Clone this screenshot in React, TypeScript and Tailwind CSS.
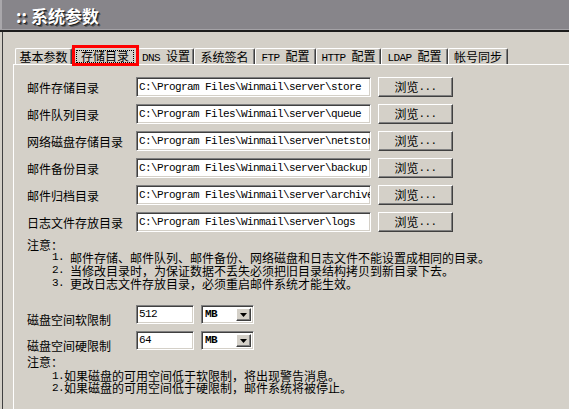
import type { ReactNode } from "react";
import clsx from "clsx";

const Mono = ({ children, className }: { children: ReactNode; className?: string }) => (
  <span className={clsx("font-['Liberation_Mono',monospace] text-[11px] tracking-[-0.6px]", className)}>
    {children}
  </span>
);

const tabs: { label: ReactNode; w: string; active?: boolean }[] = [
  { label: "基本参数", w: "w-[57px]" },
  { label: "存储目录", w: "w-[66px]", active: true },
  { label: <><Mono>DNS </Mono>设置</>, w: "w-[56px]" },
  { label: "系统签名", w: "w-[61px]" },
  { label: <><Mono>FTP </Mono>配置</>, w: "w-[61px]" },
  { label: <><Mono>HTTP </Mono>配置</>, w: "w-[65px]" },
  { label: <><Mono>LDAP </Mono>配置</>, w: "w-[67px]" },
  { label: "帐号同步", w: "w-[60px]" },
];

const dirs = [
  { label: "邮件存储目录", path: "C:\\Program Files\\Winmail\\server\\store" },
  { label: "邮件队列目录", path: "C:\\Program Files\\Winmail\\server\\queue" },
  { label: "网络磁盘存储目录", path: "C:\\Program Files\\Winmail\\server\\netstore" },
  { label: "邮件备份目录", path: "C:\\Program Files\\Winmail\\server\\backup" },
  { label: "邮件归档目录", path: "C:\\Program Files\\Winmail\\server\\archive" },
  { label: "日志文件存放目录", path: "C:\\Program Files\\Winmail\\server\\logs" },
];

const dirNotes = [
  "邮件存储、邮件队列、邮件备份、网络磁盘和日志文件不能设置成相同的目录。",
  "当修改目录时，为保证数据不丢失必须把旧目录结构拷贝到新目录下去。",
  "更改日志文件存放目录，必须重启邮件系统才能生效。",
];

const diskNotes = [
  "如果磁盘的可用空间低于软限制，将出现警告消息。",
  "如果磁盘的可用空间低于硬限制，邮件系统将被停止。",
];

const sunken =
  "bg-white border border-t-[#808080] border-l-[#808080] border-b-white border-r-white shadow-[inset_1px_1px_0_#404040,inset_-1px_-1px_0_#d4d0c8]";
const raised =
  "bg-[#d4d0c8] border border-t-white border-l-white border-b-[#404040] border-r-[#404040] shadow-[inset_-1px_-1px_0_#808080]";

const Tab = ({ label, w, active }: { label: ReactNode; w: string; active?: boolean }) => (
  <div
    className={clsx(
      "relative flex items-center justify-center rounded-t-[2px] border-t border-l border-r border-t-white border-l-white border-r-[#404040] shadow-[inset_-1px_0_0_#808080] bg-[#d4d0c8]",
      w,
      active ? "h-[19px] -mb-px z-10" : "h-[16px]"
    )}
  >
    {active ? (
      <>
        <span className="h-[13px] px-[4px] flex items-center border border-dotted border-black">
          {label}
        </span>
        <span className="absolute -left-[1px] -right-[2px] -top-[2px] -bottom-[1px] border-[3px] border-[#ff0000]" />
      </>
    ) : (
      <span className="pt-[1px]">{label}</span>
    )}
  </div>
);

const DirRow = ({ label, path }: { label: string; path: string }) => (
  <div className="flex items-center h-[20px]">
    <div className="w-[109px] pt-[2px]">{label}</div>
    <div className={clsx("w-[235px] h-[20px] pl-[2px] flex items-center overflow-hidden whitespace-nowrap", sunken)}>
      <Mono>{path}</Mono>
    </div>
    <button className={clsx("ml-[7px] w-[75px] h-[20px] flex items-center justify-center", raised)}>
      浏览<Mono>...</Mono>
    </button>
  </div>
);

const LimitRow = ({ label, value }: { label: string; value: string }) => (
  <div className="flex items-start h-[19px]">
    <div className="w-[109px] mt-[8px] leading-[13px]">{label}</div>
    <div className={clsx("w-[58px] h-[19px] pl-[2px] flex items-center", sunken)}>
      <Mono>{value}</Mono>
    </div>
    <div className={clsx("ml-[7px] w-[53px] h-[19px] flex items-stretch p-[2px]", sunken)}>
      <div className="flex-1 flex items-center pl-[1px] font-bold">
        <Mono>MB</Mono>
      </div>
      <div className={clsx("w-[15px] flex items-center justify-center", raised)}>
        <svg width="7" height="4" viewBox="0 0 7 4">
          <path d="M0 0h7L3.5 4z" fill="#000" />
        </svg>
      </div>
    </div>
  </div>
);

const NoteLine = ({ n, text, h, gap }: { n: string; text: string; h: string; gap: string }) => (
  <div className={clsx("flex items-center whitespace-nowrap", h)}>
    <Mono className={clsx("leading-none", gap)}>{n}</Mono>
    <span className="leading-none">{text}</span>
  </div>
);

export default function App() {
  return (
    <div className="w-[569px] h-[409px] overflow-hidden flex flex-col bg-[#d4d0c8] text-black text-[12px] font-['Noto_Sans_CJK_SC',sans-serif]">
      <header className="h-[32px] shrink-0 flex flex-col">
        <div className="h-[29px] bg-[#87858a] border-l-2 border-[#a9a7ab] flex items-center pl-[14px] pt-[2px]">
          <h1 className="text-white font-bold text-[17px] leading-none [text-shadow:1px_1px_0_#222,2px_2px_0_#555]">
            :: 系统参数
          </h1>
        </div>
        <div className="h-[1px] bg-[#a4a2a6]" />
        <div className="h-[2px] bg-[#1c1c1c]" />
      </header>

      <div className="flex-1 flex flex-col pl-[2px]">
        <div className="flex-1 flex flex-col border-l border-[#404040]">
          <div className="ml-[11px] mt-[14px] pl-[1px] flex items-end">
            {tabs.map((t, i) => (
              <Tab key={i} {...t} />
            ))}
          </div>

          <div className="ml-[10px] flex-1 border-t border-l border-white pl-[13px] pt-[12px]">
            <div className="flex flex-col gap-[7px]">
              {dirs.map((d) => (
                <DirRow key={d.label} {...d} />
              ))}
            </div>

            <div className="mt-[6px]">
              <div className="h-[13px] flex items-center">注意：</div>
              <div className="pl-[25px]">
                {dirNotes.map((t, i) => (
                  <NoteLine key={i} n={`${i + 1}.`} text={t} h="h-[13px]" gap="pr-[6px]" />
                ))}
              </div>
            </div>

            <div className="mt-[15px] flex flex-col gap-[7px]">
              <LimitRow label="磁盘空间软限制" value="512" />
              <LimitRow label="磁盘空间硬限制" value="64" />
            </div>

            <div className="mt-[5px]">
              <div className="h-[13px] flex items-center">注意：</div>
              <div className="mt-[2px] pl-[25px]">
                {diskNotes.map((t, i) => (
                  <NoteLine key={i} n={`${i + 1}.`} text={t} h="h-[12px]" gap="pr-0" />
                ))}
              </div>
            </div>
          </div>
        </div>
      </div>
    </div>
  );
}
